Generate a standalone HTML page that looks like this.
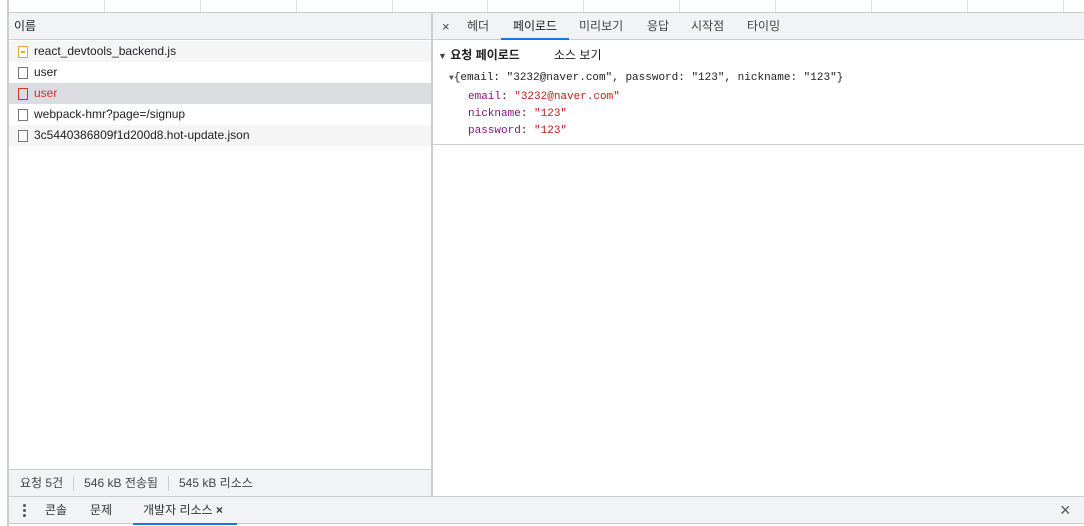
<!DOCTYPE html>
<html><head><meta charset="utf-8">
<style>
*{margin:0;padding:0;box-sizing:border-box}
body{width:1084px;height:526px;overflow:hidden;background:#fff;font-family:"Liberation Sans","Noto Sans CJK KR",sans-serif;font-size:12px;color:#202124;position:relative}
.abs{position:absolute}
.vl{position:absolute;top:0;height:12px;width:1px;background:#e0e0e0}
.row{position:absolute;left:9px;width:422px;height:21px;line-height:21px;padding-left:25px}
.ic{position:absolute;left:9px;top:5px;width:10px;height:12px;border:1px solid #777;background:#fff}
.tab{position:absolute;top:13px;height:27px;line-height:27px;color:#444;font-size:12px}
.mono{font-family:"Liberation Mono","Noto Sans CJK KR",monospace;font-size:11px}
</style></head><body>
<div class="abs" style="left:7px;top:0;width:2px;height:526px;background:#cbcdd1"></div>
<div class="vl" style="left:104px"></div><div class="vl" style="left:200px"></div><div class="vl" style="left:296px"></div><div class="vl" style="left:392px"></div><div class="vl" style="left:487px"></div><div class="vl" style="left:583px"></div><div class="vl" style="left:679px"></div><div class="vl" style="left:775px"></div><div class="vl" style="left:871px"></div><div class="vl" style="left:967px"></div><div class="vl" style="left:1063px"></div>
<div class="abs" style="left:7px;top:12px;width:1077px;height:1px;background:#cbcdd1"></div>
<!-- left header -->
<div class="abs" style="left:9px;top:13px;width:422px;height:27px;background:#f1f3f4;border-bottom:1px solid #cbcdd1;line-height:27px;padding-left:5px">이름</div>
<div class="row" style="top:41px;background:#f5f5f5"><div class="ic" style="border-color:#e8a93a"><div style="position:absolute;left:2px;top:4px;width:4px;height:2px;border:1px solid #e8a93a"></div></div>react_devtools_backend.js</div>
<div class="row" style="top:62px">
<div class="ic"></div>user</div>
<div class="row" style="top:83px;background:#dadce0;color:#d93025"><div class="ic" style="border-color:#d93025;background:transparent"></div>user</div>
<div class="row" style="top:104px"><div class="ic"></div>webpack-hmr?page=/signup</div>
<div class="row" style="top:125px;background:#f5f5f5"><div class="ic"></div>3c5440386809f1d200d8.hot-update.json</div>
<!-- divider -->
<div class="abs" style="left:431px;top:13px;width:2px;height:484px;background:#cbcdd1"></div>
<!-- footer -->
<div class="abs" style="left:9px;top:469px;width:422px;height:27px;background:#f1f3f4;border-top:1px solid #cbcdd1;line-height:26px;color:#444;padding-left:11px">요청 5건<span style="display:inline-block;width:1px;height:15px;background:#cbcdd1;vertical-align:middle;margin:0 10px"></span>546 kB 전송됨<span style="display:inline-block;width:1px;height:15px;background:#cbcdd1;vertical-align:middle;margin:0 10px"></span>545 kB 리소스</div>
<!-- right tabs -->
<div class="abs" style="left:433px;top:13px;width:651px;height:27px;background:#f1f3f4;border-bottom:1px solid #cbcdd1"></div>
<div class="tab" style="left:442px;font-size:13px">×</div>
<div class="tab" style="left:467px">헤더</div>
<div class="tab" style="left:501px;width:68px;text-align:center;color:#202124">페이로드<div style="position:absolute;left:0;bottom:0;width:68px;height:2px;background:#1a73e8"></div></div>
<div class="tab" style="left:579px">미리보기</div>
<div class="tab" style="left:647px">응답</div>
<div class="tab" style="left:691px">시작점</div>
<div class="tab" style="left:747px">타이밍</div>
<!-- payload -->
<div class="abs" style="left:438px;top:46px;font-weight:bold;line-height:18px"><span style="font-size:9px;color:#444">▼</span> 요청 페이로드</div>
<div class="abs" style="left:554px;top:46px;line-height:18px">소스 보기</div>
<div class="abs mono" style="left:449px;top:70px;line-height:16px"><span style="font-size:8px;color:#555">▼</span>{email: "3232@naver.com", password: "123", nickname: "123"}</div>
<div class="abs mono" style="left:468px;top:89px;line-height:17px"><span style="color:#881280">email</span>: <span style="color:#c41a16">"3232@naver.com"</span><br><span style="color:#881280">nickname</span>: <span style="color:#c41a16">"123"</span><br><span style="color:#881280">password</span>: <span style="color:#c41a16">"123"</span></div>
<div class="abs" style="left:433px;top:144px;width:651px;height:1px;background:#cbcdd1"></div>
<!-- bottom bar -->
<div class="abs" style="left:9px;top:496px;width:1075px;height:1px;background:#cbcdd1"></div>
<div class="abs" style="left:9px;top:497px;width:1075px;height:27px;background:#f1f3f4;border-bottom:1px solid #cbcdd1"></div>
<div class="abs" style="left:23px;top:504px;width:3px;height:3px;background:#555;border-radius:50%"></div>
<div class="abs" style="left:23px;top:509px;width:3px;height:3px;background:#555;border-radius:50%"></div>
<div class="abs" style="left:23px;top:514px;width:3px;height:3px;background:#555;border-radius:50%"></div>
<div class="abs" style="left:45px;top:497px;line-height:27px;color:#333">콘솔</div>
<div class="abs" style="left:90px;top:497px;line-height:27px;color:#333">문제</div>
<div class="abs" style="left:133px;top:497px;width:104px;height:27px;line-height:27px;padding-left:10px;color:#333">개발자 리소스 <b style="font-size:12px">×</b><div style="position:absolute;left:0;bottom:-1px;width:104px;height:2px;background:#1a73e8"></div></div>
<div class="abs" style="left:1060px;top:497px;line-height:27px;font-size:18px;color:#555">×</div>
</body></html>
